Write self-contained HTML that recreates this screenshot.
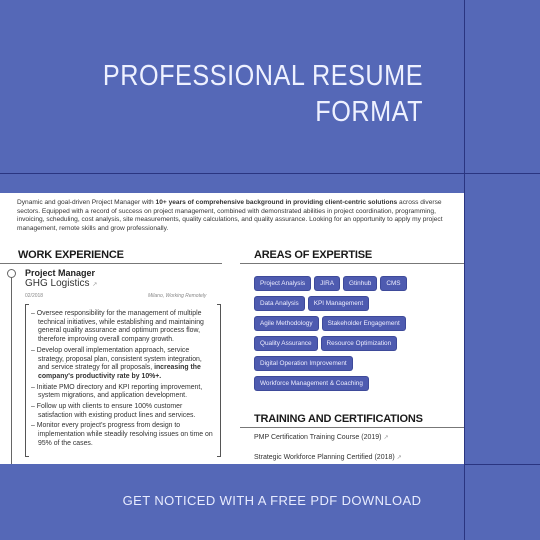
<!DOCTYPE html>
<html><head><meta charset="utf-8"><style>
*{margin:0;padding:0;box-sizing:border-box}
body{width:540px;height:540px;background:#5568b7;position:relative;overflow:hidden;font-family:"Liberation Sans",sans-serif}
.abs{position:absolute}
.title{right:117px;top:58px;color:#eef1ff;font-size:29px;letter-spacing:0.6px;line-height:36px;text-align:right;font-weight:300;transform:scaleX(0.87);transform-origin:right top;white-space:nowrap}
.card{left:0;top:193px;width:464px;height:271px;background:#fff;overflow:hidden}
.intro{left:17px;top:6px;width:440px;font-size:6.6px;line-height:8.6px;color:#333}
.h{font-size:11px;font-weight:bold;color:#1a1a1a;letter-spacing:-0.2px}
.hl{height:1px;background:#777}
.row{height:20px;white-space:nowrap}
.tag{display:inline-block;background:#4e5bb0;color:#eef;font-size:6.4px;line-height:7px;padding:3px 5px;border-radius:2px;margin-right:5px;box-shadow:0 0 0 1px #3e4a9a}
.ul{font-size:6.9px;line-height:8.7px;color:#333}
.ul div{padding-left:9px;text-indent:-7px;margin-bottom:2px}
.bot{left:0;width:544px;top:493px;text-align:center;color:#e8ecff;font-size:13px;letter-spacing:0.4px}
</style></head><body>
<div class="abs" style="left:464px;top:0;width:1px;height:540px;background:#2a3580"></div>
<div class="abs" style="left:0;top:173px;width:540px;height:1px;background:#2a3580"></div>
<div class="abs" style="left:464px;top:464px;width:76px;height:1px;background:#2a3580"></div>
<div class="abs title">PROFESSIONAL RESUME<br>FORMAT</div>
<div class="abs card">
 <div class="abs intro">Dynamic and goal-driven Project Manager with <b>10+ years of comprehensive background in providing client-centric solutions</b> across diverse sectors. Equipped with a record of success on project management, combined with demonstrated abilities in project coordination, programming, invoicing, scheduling, cost analysis, site measurements, quality calculations, and quality assurance. Looking for an opportunity to apply my project management, remote skills and grow professionally.</div>
 <div class="abs h" style="left:18px;top:56px">WORK EXPERIENCE</div>
 <div class="abs hl" style="left:0;top:70px;width:222px"></div>
 <div class="abs" style="left:11px;top:82px;width:1px;height:200px;background:#666"></div>
 <div class="abs" style="left:7px;top:76px;width:9px;height:9px;border:1.5px solid #666;border-radius:50%;background:#fff"></div>
 <div class="abs" style="left:25px;top:75px;font-size:9px;font-weight:bold;color:#222">Project Manager</div>
 <div class="abs" style="left:25px;top:85px;font-size:10px;color:#333">GHG Logistics <span style="font-size:6px;color:#999">↗</span></div>
 <div class="abs" style="left:25px;top:100px;font-size:5px;color:#888">02/2018</div>
 <div class="abs" style="left:148px;top:100px;font-size:5px;color:#888;font-style:italic">Milano, Working Remotely</div>
 <div class="abs" style="left:25px;top:111px;width:196px;height:153px;border-left:1px solid #555;border-right:1px solid #555"></div>
 <div class="abs" style="left:25px;top:111px;width:196px;height:153px;border-top:1px solid #555;border-bottom:1px solid #555;clip-path:polygon(0 0,4px 0,4px 100%,0 100%,0 0,100% 0,100% 100%,calc(100% - 4px) 100%,calc(100% - 4px) 0)"></div>
 <div class="abs ul" style="left:29px;top:117px;width:186px">
  <div>– Oversee responsibility for the management of multiple technical initiatives, while establishing and maintaining general quality assurance and optimum process flow, therefore improving overall company growth.</div>
  <div>– Develop overall implementation approach, service strategy, proposal plan, consistent system integration, and service strategy for all proposals, <b>increasing the company's productivity rate by 10%+.</b></div>
  <div>– Initiate PMO directory and KPI reporting improvement, system migrations, and application development.</div>
  <div>– Follow up with clients to ensure 100% customer satisfaction with existing product lines and services.</div>
  <div>– Monitor every project's progress from design to implementation while steadily resolving issues on time on 95% of the cases.</div>
 </div>
 <div class="abs h" style="left:254px;top:56px">AREAS OF EXPERTISE</div>
 <div class="abs hl" style="left:240px;top:70px;width:224px"></div>
 <div class="abs" style="left:255px;top:79px;width:210px">
  <div class="row"><span class="tag">Project Analysis</span><span class="tag">JIRA</span><span class="tag">Gtinhub</span><span class="tag">CMS</span></div>
  <div class="row"><span class="tag">Data Analysis</span><span class="tag">KPI Management</span></div>
  <div class="row"><span class="tag">Agile Methodology</span><span class="tag">Stakeholder Engagement</span></div>
  <div class="row"><span class="tag">Quality Assurance</span><span class="tag">Resource Optimization</span></div>
  <div class="row"><span class="tag">Digital Operation Improvement</span></div>
  <div class="row"><span class="tag">Workforce Management &amp; Coaching</span></div>
 </div>
 <div class="abs h" style="left:254px;top:220px">TRAINING AND CERTIFICATIONS</div>
 <div class="abs hl" style="left:240px;top:234px;width:224px"></div>
 <div class="abs" style="left:254px;top:241px;font-size:7px;color:#333">PMP Certification Training Course (2019) <span style="color:#999;font-size:6px">↗</span></div>
 <div class="abs" style="left:254px;top:261px;font-size:7px;color:#333">Strategic Workforce Planning Certified (2018) <span style="color:#999;font-size:6px">↗</span></div>
</div>
<div class="abs bot">GET NOTICED WITH A FREE PDF DOWNLOAD</div>
</body></html>
